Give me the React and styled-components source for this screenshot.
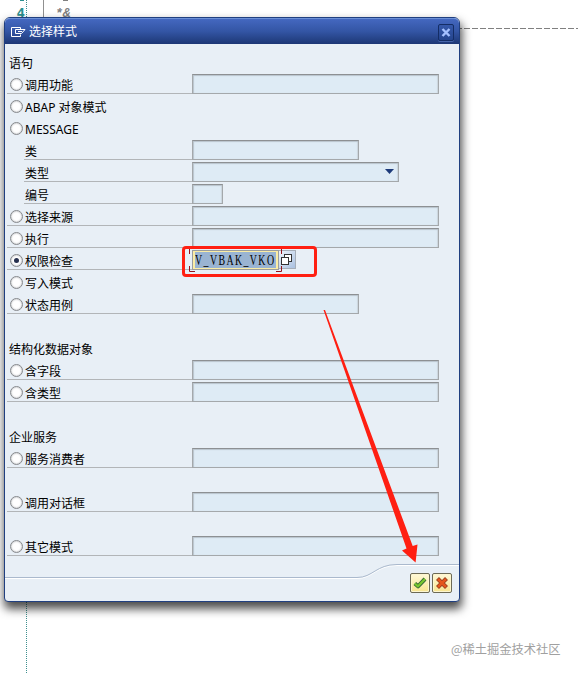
import React from "react";
import styled, { createGlobalStyle, css } from "styled-components";

const GlobalStyle = createGlobalStyle`
  * { box-sizing: border-box; }
  body {
    margin: 0;
    background: #fff;
    font-family: "Noto Sans", "Noto Sans CJK SC", sans-serif;
    font-size: 12px;
    color: #000;
  }
`;

const Screen = styled.div`
  position: relative;
  width: 578px;
  height: 673px;
  overflow: hidden;
  background: #fff;
`;

const Editor = styled.div`
  display: flex;
  height: 100%;
  font: 14px/16px "Liberation Mono", monospace;
`;

const Gutter = styled.div`
  width: 27px;
  padding: 5px 2px 0 0;
  text-align: right;
  font-family: "DejaVu Sans Mono", monospace;
  font-weight: bold;
  color: #2b8f8f;
  background: repeating-linear-gradient(#3f8f8f 0 1px, #fff 1px 2px) right / 1px 100% no-repeat;
`;

const Fold = styled.div`
  width: 17px;
  height: 100px;
  border-right: 1px solid #909090;
`;

const Code = styled.div`
  flex: 1;
  padding: 6px 0 0 11px;
  font-size: 13px;
  line-height: 16px;
  font-weight: bold;
  font-style: italic;
  color: #808080;
`;

const DashedRule = styled.div`
  height: 1px;
  margin-top: 6px;
  margin-left: 1px;
  background: repeating-linear-gradient(90deg, #808080 0 6px, #fff 6px 8px);
`;

const Dialog = styled.section`
  position: absolute;
  left: 4px;
  top: 17px;
  width: 456px;
  height: 585px;
  display: flex;
  flex-direction: column;
  border: 1px solid #203f80;
  border-radius: 6px 6px 4px 4px;
  background: #e8eff6;
  box-shadow: 1px 6px 10px 1px rgba(0, 0, 0, 0.7);
`;

const TitleBar = styled.header`
  height: 26px;
  flex: none;
  display: flex;
  align-items: center;
  gap: 3px;
  padding: 1px 5px 0 6px;
  color: #fff;
  border-top: 1px solid #6b8fd6;
  border-radius: 5px 5px 0 0;
  background: linear-gradient(#4468c0, #3355a4 50%, #1d3775);
`;

const Title = styled.h1`
  flex: 1;
  margin: 0;
  font-size: 12px;
  font-weight: normal;
  line-height: 16px;
`;

const CloseButton = styled.button`
  display: grid;
  place-items: center;
  width: 16px;
  height: 17px;
  padding: 0;
  border: 1px solid #142d66;
  border-radius: 2px;
  background: linear-gradient(#3558aa, #25458e);
  box-shadow: 0 1px 0 #4766ab;
`;

const Form = styled.div`
  flex: none;
  padding: 8px 0 0 2px;
`;

const Row = styled.div`
  display: flex;
  height: 22px;
  margin-left: ${(p) => (p.$nested ? 17 : 0)}px;
`;

const Label = styled.label`
  display: flex;
  align-items: center;
  flex: none;
  gap: 2px;
  width: ${(p) => (p.$nested ? 168 : 185)}px;
  height: 20px;
  padding: ${(p) => (p.$nested ? "2px 0 0 1px" : "1px 0 0 3px")};
  ${(p) => p.$heading && "padding-left: 2px;"}
  line-height: 16px;
  white-space: nowrap;
  border-bottom: 1px solid ${(p) => (p.$line ? "#b2b5b8" : "transparent")};
`;

const LabelText = styled.span`
  padding-top: ${(p) => (p.$nested ? 2 : 3)}px;
`;

const Radio = styled.span`
  display: grid;
  place-items: center;
  flex: none;
  width: 13px;
  height: 13px;
  border: 1px solid #85888c;
  border-radius: 50%;
  background: #fff;
  box-shadow: inset 0 0 2px #9c9fa4;
  ${(p) =>
    p.$checked &&
    css`
      &::after {
        content: "";
        width: 5px;
        height: 5px;
        border-radius: 50%;
        background: #26304f;
      }
    `}
`;

const Field = styled.div`
  display: flex;
  align-items: center;
  justify-content: flex-end;
  width: ${(p) => p.$width}px;
  height: 20px;
  padding: 0 4px 2px 0;
  border: 1px solid #a4a8ab;
  border-top-color: #8d9093;
  background: #deebf5;
  box-shadow: inset 1px 1px 1px #b9c4cd, inset -1px 0 1px #cbd5dd;
`;

const ActiveField = styled.div`
  display: flex;
  align-items: center;
  width: 87px;
  height: 20px;
  padding: 0 2px;
  border: 1px solid #9b9d9e;
  background: #fbeda5;
`;

const Selection = styled.div`
  width: 81px;
  height: 16px;
  background: #9ab4d2;
  overflow: hidden;
`;

const Value = styled.span`
  display: block;
  width: 120px;
  font: 14px/17px "Liberation Serif", serif;
  letter-spacing: 2px;
  white-space: nowrap;
  transform: scaleX(0.705);
  transform-origin: left;
`;

const LookupButton = styled.button`
  display: grid;
  place-items: center;
  width: 17px;
  height: 19px;
  padding: 0 2px 0 0;
  border: 1px solid #a6aeb8;
  border-left: 0;
  background: linear-gradient(135deg, #eef4fb, #a9c0e0);
`;

const Footer = styled.footer`
  position: relative;
  flex: 1;
  display: flex;
  justify-content: flex-end;
  gap: 2px;
  padding: 15px 7px 0 0;
`;

const FooterEdge = styled.svg`
  position: absolute;
  left: 0;
  top: 0;
`;

const ActionButton = styled.button`
  position: relative;
  display: grid;
  place-items: center;
  width: 20px;
  height: 20px;
  padding: 0 1px 1px 0;
  border: 1px solid #6d6a55;
  border-radius: 2px;
  background: linear-gradient(#fff9d8, #f8e48e);
  box-shadow: inset 0 0 0 1px #fdf6cf;
`;

const Highlight = styled.div`
  position: absolute;
  left: 182px;
  top: 246px;
  width: 135px;
  height: 31px;
  border: 3px solid #ff1f12;
  border-radius: 4px;
`;

const Overlay = styled.svg`
  position: absolute;
  left: 0;
  top: 0;
`;

const Watermark = styled.div`
  position: absolute;
  left: 451px;
  top: 640px;
  font: 12.25px/18px "Noto Sans CJK SC", sans-serif;
  color: #a0a0a0;
  white-space: nowrap;
`;

const rows = [
  { label: "语句", heading: true },
  { label: "调用功能", width: 247 },
  { label: "ABAP 对象模式" },
  { label: "MESSAGE" },
  { label: "类", nested: true, width: 167 },
  { label: "类型", nested: true, width: 207, select: true },
  { label: "编号", nested: true, width: 31 },
  { label: "选择来源", width: 247 },
  { label: "执行", width: 247 },
  { label: "权限检查", checked: true, value: "V_VBAK_VKO" },
  { label: "写入模式" },
  { label: "状态用例", width: 167 },
  {},
  { label: "结构化数据对象", heading: true },
  { label: "含字段", width: 247 },
  { label: "含类型", width: 247 },
  {},
  { label: "企业服务", heading: true },
  { label: "服务消费者", width: 247 },
  {},
  { label: "调用对话框", width: 247 },
  {},
  { label: "其它模式", width: 247 },
];

function FormRow({ label, heading, nested, width, select, checked, value }) {
  if (!label) return <Row />;
  return (
    <Row $nested={nested}>
      <Label $nested={nested} $heading={heading} $line={Boolean(width || value)}>
        {!heading && !nested && <Radio $checked={checked} />}
        <LabelText $nested={nested}>{label}</LabelText>
      </Label>
      {width && (
        <Field $width={width}>
          {select && (
            <svg width="9" height="5">
              <path d="M0 0H9L4.5 5Z" fill="#1d3a7a" />
            </svg>
          )}
        </Field>
      )}
      {value && (
        <>
          <ActiveField>
            <Selection>
              <Value>{value}</Value>
            </Selection>
          </ActiveField>
          <LookupButton aria-label="lookup">
            <svg width="13" height="13" fill="#fff" stroke="#333" shapeRendering="crispEdges">
              <path d="M4.5 1.5H11.5V8.5H4.5Z" />
              <path d="M1.5 4.5H8.5V11.5H1.5Z" />
            </svg>
          </LookupButton>
        </>
      )}
    </Row>
  );
}

export default function App() {
  return (
    <Screen>
      <GlobalStyle />
      <Editor>
        <Gutter>4</Gutter>
        <Fold />
        <Code>
          *&amp;
          <DashedRule />
        </Code>
      </Editor>
      <Dialog>
        <TitleBar>
          <svg width="15" height="12" fill="none" stroke="#fff">
            <path d="M9.5 1.5H.5V10.5H9.5V8.5M9.5 1.5V3.5M4.5 7.5V3.5H14L10.5 7.5H4.5M7 5.5H11" />
          </svg>
          <Title>选择样式</Title>
          <CloseButton aria-label="close">
            <svg width="10" height="9" stroke="#a5c1ff" strokeWidth="2.4">
              <path d="M1.5 1L8.5 8M8.5 1L1.5 8" />
            </svg>
          </CloseButton>
        </TitleBar>
        <Form>
          {rows.map((row, i) => (
            <FormRow key={i} {...row} />
          ))}
        </Form>
        <Footer>
          <FooterEdge width="454" height="30" fill="none">
            <path d="M0 20.5H352C368 20.5 371 7.5 392 7.5H454" stroke="#fff" />
            <path d="M0 19.5H352C368 19.5 371 6.5 392 6.5H454" stroke="#aab9cd" />
          </FooterEdge>
          <ActionButton aria-label="confirm">
            <svg width="14" height="12" fill="none" strokeLinejoin="round">
              <path d="M1.8 6.5L5 9.3L12 2" stroke="#376a36" strokeWidth="4" />
              <path d="M1.8 6.5L5 9.3L12 2" stroke="#78c72e" strokeWidth="2.2" />
            </svg>
          </ActionButton>
          <ActionButton aria-label="cancel">
            <svg width="12" height="12">
              <path d="M1.5 1.5L10.5 10.5M10.5 1.5L1.5 10.5" stroke="#8f3a20" strokeWidth="4.2" />
              <path d="M2 2L10 10M10 2L2 10" stroke="#e5571c" strokeWidth="2.6" />
            </svg>
          </ActionButton>
        </Footer>
      </Dialog>
      <Highlight />
      <Overlay width="578" height="673">
        <path d="M189.5 249V254M189.5 266V271.5H195M281.5 249V254M281.5 266V271.5H276" fill="none" stroke="#96141c" />
        <path d="M323.5 310L325 310L412.7 546L417.5 544.5L415.6 562.5L402 550.5L406.5 548.5Z" fill="#ff1f12" />
        <path d="M20 .5H24" stroke="#2b8f8f" />
        <path d="M63 .5H68" stroke="#808080" />
      </Overlay>
      <Watermark>@稀土掘金技术社区</Watermark>
    </Screen>
  );
}
